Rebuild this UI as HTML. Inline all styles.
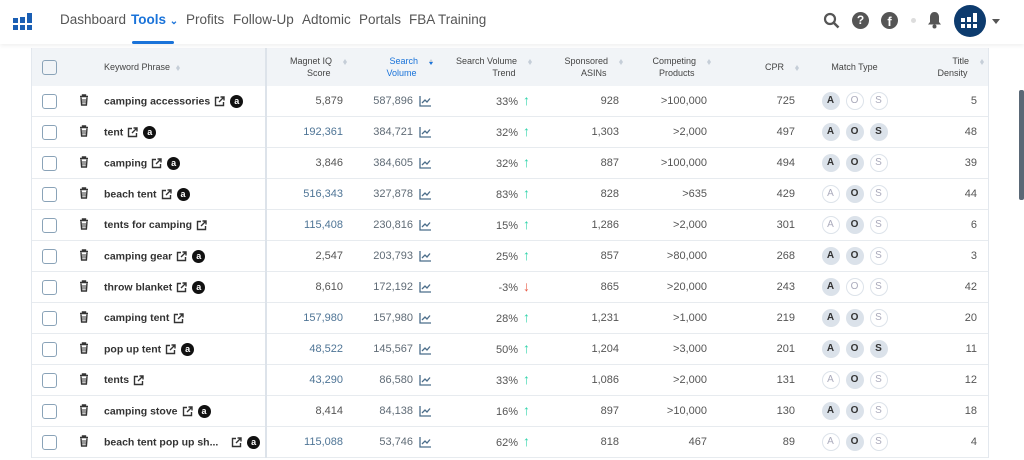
<!DOCTYPE html><html><head><meta charset="utf-8"><style>
body{margin:0;width:1024px;height:460px;overflow:hidden;background:#fff;font-family:"Liberation Sans",sans-serif;position:relative}
.nav{position:absolute;top:0;left:0;width:1024px;height:44px;background:#fff;box-shadow:0 2px 4px rgba(0,0,0,.06);z-index:2}
.nav a{position:absolute;top:12px;font-size:13.5px;color:#555}
.logo{position:absolute;left:13px;top:13px}
.wrap{position:absolute;left:31px;top:48px;width:956px;border-left:1px solid #e3e8ee;border-right:1px solid #e3e8ee}
table{border-collapse:collapse;table-layout:fixed;width:956px;font-size:11px;color:#555}
th{height:38px;background:#f1f4f7;font-size:9px;font-weight:normal;color:#444;text-align:right;line-height:12px;padding:0 8px 0 0}
td{height:30px;border-bottom:1px solid #e7ebef;text-align:right;padding:0 8px 0 0;white-space:nowrap}
.c{text-align:center;padding:0}
.k{text-align:left;font-weight:bold;color:#333;font-size:10.5px}
.sep{border-right:2px solid #dde3ea}
.cb{display:inline-block;width:13px;height:13px;border:1.3px solid #8aa3b8;border-radius:3px;vertical-align:middle}
.ar{display:inline-block;width:13px;height:13px;border-radius:50%;background:#111;color:#fff;font-size:9px;line-height:12px;text-align:center;font-weight:bold;vertical-align:middle;margin-left:5px}
.ex{display:inline-block;vertical-align:middle;margin-left:4px}
.m{display:inline-block;width:18px;height:18px;border-radius:50%;font-size:10px;line-height:18px;text-align:center;margin:0 3px;font-weight:bold;vertical-align:middle}
.f{background:#dbe2ea;color:#333}.o{border:1px solid #dde3ea;width:16px;height:16px;line-height:16px;color:#aab;font-weight:normal;background:#fff}
.b{color:#4f7596}.sv{color:#5f6b76}
.up,.dn{font-size:14px;line-height:10px;margin-left:5px;display:inline-block;vertical-align:0}
.up{color:#2fd3aa}.dn{color:#e85a45}
.s{display:inline-block;width:5px;height:10px;margin-left:6px;vertical-align:middle;position:relative}
.s:before{content:"";position:absolute;top:0;border:2.5px solid transparent;border-bottom:3px solid #c5ced8}
.s:after{content:"";position:absolute;bottom:0;border:2.5px solid transparent;border-top:3px solid #c5ced8}
.sd:after{border-top-color:#1a73d9}
.bl{color:#1a73d9}
</style></head><body>
<div class="nav">
<svg class="logo" width="20" height="17" viewBox="0 0 20 17"><g fill="#1a5fb4"><rect x="0" y="5" width="5" height="5"/><rect x="7" y="4" width="5" height="6"/><rect x="14" y="0" width="5" height="10"/><rect x="0" y="12" width="5" height="5"/><rect x="7" y="12" width="5" height="5"/><rect x="14" y="12" width="5" height="5"/></g></svg>
<a style="left:60px">Dashboard</a><a style="left:131px;color:#1a73d9;font-weight:bold">Tools <span style="font-size:10px">&#8964;</span></a>
<div style="position:absolute;left:132px;top:41px;width:42px;height:3px;background:#1a73d9;border-radius:2px"></div>
<a style="left:186px">Profits</a><a style="left:233px">Follow-Up</a><a style="left:302px">Adtomic</a><a style="left:359px">Portals</a><a style="left:409px">FBA Training</a>
<svg style="position:absolute;left:823px;top:12px" width="17" height="17" viewBox="0 0 17 17"><circle cx="7" cy="7" r="5" fill="none" stroke="#555" stroke-width="2.2"/><path d="M11 11l4.5 4.5" stroke="#555" stroke-width="2.5"/></svg>
<div style="position:absolute;left:852px;top:12px;width:17px;height:17px;border-radius:50%;background:#555;color:#fff;font-size:12px;font-weight:bold;text-align:center;line-height:17px">?</div>
<div style="position:absolute;left:881px;top:12px;width:17px;height:17px;border-radius:50%;background:#555;color:#fff;font-size:13px;font-weight:bold;text-align:center;line-height:20px;overflow:hidden">f</div>
<div style="position:absolute;left:911px;top:18px;width:5px;height:5px;border-radius:50%;background:#ddd"></div>
<svg style="position:absolute;left:927px;top:11px" width="15" height="18" viewBox="0 0 15 18"><path d="M7.5 1c-3 0-4.5 2.5-4.5 5v5l-2 2.5h13l-2-2.5v-5c0-2.5-1.5-5-4.5-5z" fill="#555"/><circle cx="7.5" cy="15.5" r="2" fill="#555"/></svg>
<div style="position:absolute;left:954px;top:5px;width:32px;height:32px;border-radius:50%;background:#0d3b6e"><svg style="position:absolute;left:7px;top:8px" width="18" height="16" viewBox="0 0 18 16"><g fill="#fff"><rect x="0" y="5" width="4" height="4"/><rect x="6" y="4" width="4" height="5"/><rect x="12" y="0" width="4" height="9"/><rect x="0" y="11" width="4" height="4"/><rect x="6" y="11" width="4" height="4"/><rect x="12" y="11" width="4" height="4"/></g></svg></div>
<div style="position:absolute;left:992px;top:19px;border:4px solid transparent;border-top:5px solid #555"></div>
</div>
<div style="position:absolute;left:1019px;top:90px;width:5px;height:110px;background:#5a6876;border-radius:2px"></div>
<div class="wrap"><table>
<colgroup><col style="width:34px"><col style="width:35px"><col style="width:165px"><col style="width:85px"><col style="width:86px"><col style="width:99px"><col style="width:91px"><col style="width:88px"><col style="width:88px"><col style="width:103px"><col style="width:82px"></colgroup>
<tr><th class="c"><span class="cb"></span></th><th></th><th class="sep" style="text-align:left;padding-left:3px">Keyword Phrase<span class="s"></span></th><th>Magnet IQ<span class="s"></span><br>Score&nbsp;&nbsp;&nbsp;&nbsp;&nbsp;</th><th class="bl">Search<span class="s sd"></span><br>Volume&nbsp;&nbsp;&nbsp;&nbsp;&nbsp;</th><th>Search Volume<span class="s"></span><br>Trend&nbsp;&nbsp;&nbsp;&nbsp;&nbsp;</th><th>Sponsored<span class="s"></span><br>ASINs&nbsp;&nbsp;&nbsp;&nbsp;&nbsp;</th><th>Competing<span class="s"></span><br>Products&nbsp;&nbsp;&nbsp;&nbsp;&nbsp;</th><th>CPR<span class="s"></span></th><th class="c">Match Type</th><th>Title<span class="s"></span><br>Density&nbsp;&nbsp;&nbsp;&nbsp;&nbsp;</th></tr>
</table>
<table id="t"><colgroup><col style="width:34px"><col style="width:35px"><col style="width:165px"><col style="width:85px"><col style="width:86px"><col style="width:99px"><col style="width:91px"><col style="width:88px"><col style="width:88px"><col style="width:103px"><col style="width:82px"></colgroup>
<tbody id="tb"></tbody></table></div>
<script>
var tr='<svg width="10" height="12" viewBox="0 0 10 12"><path d="M1 2.5h8M3.5 2.5V1h3v1.5M2 3.5l.6 7.5h4.8l.6-7.5" fill="none" stroke="#333" stroke-width="1.4"/><path d="M4 5v4.5M6 5v4.5" stroke="#333"/></svg>';
var ex='<svg class="ex" width="11" height="11" viewBox="0 0 11 11"><path d="M5 1.5H1.5v8h8V6M6.5 1h3.5v3.5M10 1L5 6" fill="none" stroke="#333" stroke-width="1.4"/></svg>';
var ch='<svg style="vertical-align:middle;margin-left:6px" width="12" height="11" viewBox="0 0 12 11"><path d="M1 0v10h11M3 7l3-3 2 2 3-3.5" fill="none" stroke="#4b6d8a" stroke-width="1.3"/></svg>';
var R=[["camping accessories",1,"5,879",0,"587,896","33%",1,"928",">100,000","725","100","5"],
["tent",1,"192,361",1,"384,721","32%",1,"1,303",">2,000","497","111","48"],
["camping",1,"3,846",0,"384,605","32%",1,"887",">100,000","494","110","39"],
["beach tent",1,"516,343",1,"327,878","83%",1,"828",">635","429","010","44"],
["tents for camping",0,"115,408",1,"230,816","15%",1,"1,286",">2,000","301","010","6"],
["camping gear",1,"2,547",0,"203,793","25%",1,"857",">80,000","268","110","3"],
["throw blanket",1,"8,610",0,"172,192","-3%",0,"865",">20,000","243","100","42"],
["camping tent",0,"157,980",1,"157,980","28%",1,"1,231",">1,000","219","110","20"],
["pop up tent",1,"48,522",1,"145,567","50%",1,"1,204",">3,000","201","111","11"],
["tents",0,"43,290",1,"86,580","33%",1,"1,086",">2,000","131","010","12"],
["camping stove",1,"8,414",0,"84,138","16%",1,"897",">10,000","130","110","18"],
["beach tent pop up sh...",1,"115,088",1,"53,746","62%",1,"818","467","89","010","4"]];
var h='';R.forEach(function(r){var m='';"AOS".split('').forEach(function(l,i){m+='<span class="m '+(r[10][i]=='1'?'f':'o')+'">'+l+'</span>'});
h+='<tr><td class="c"><span class="cb"></span></td><td class="c">'+tr+'</td><td class="k sep" style="padding-left:3px">'+r[0]+(r[0].indexOf('...')>0?'&nbsp;&nbsp;&nbsp;':'')+ex+(r[1]?'<span class="ar">a</span>':'')+'</td><td'+(r[3]?' class="b"':'')+'>'+r[2]+'</td><td class="sv" style="padding-right:6px">'+r[4]+ch+'</td><td style="padding-right:6px">'+r[5]+'<span class="'+(r[6]?'up':'dn')+'">'+(r[6]?'&#8593;':'&#8595;')+'</span></td><td>'+r[7]+'</td><td>'+r[8]+'</td><td>'+r[9]+'</td><td class="c">'+m+'</td><td style="padding-right:11px">'+r[11]+'</td></tr>'});
document.getElementById('tb').innerHTML=h;
</script>
</body></html>
